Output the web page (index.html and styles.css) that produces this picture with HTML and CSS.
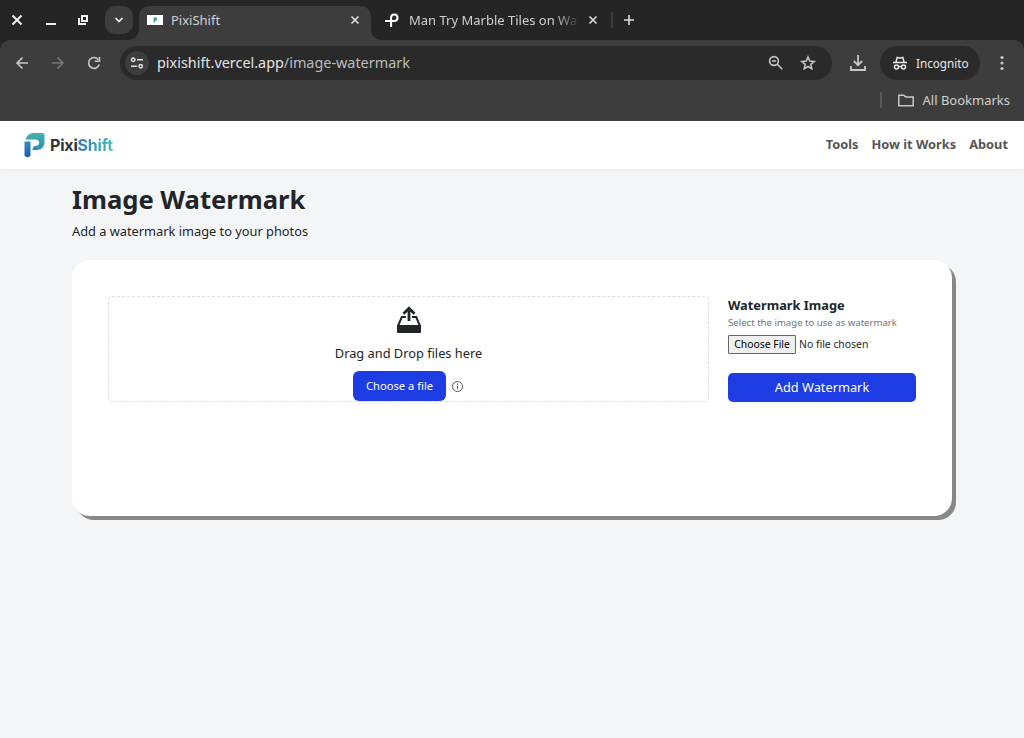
FILE: index.html
```html
<!DOCTYPE html>
<html lang="en">
<head>
  <meta charset="UTF-8" />
  <meta name="viewport" content="width=device-width, initial-scale=1.0"/>
  <title>PixiShift</title>
  <link rel="stylesheet" href="styles.css">
</head>
<body>
  <div class="browser">
    <div class="tab-strip">
      <svg class="window-icons" width="139" height="40" viewBox="0 0 139 40" fill="none" stroke="#f0f0f0" stroke-width="2">
        <path d="M12.5 15.5l9 9m0-9l-9 9M46 24h10"/>
        <path d="M82 16h5v5h-5zM79 18v6h7"/>
        <rect x="105" y="6" width="28" height="28" rx="10" fill="#3d3d3d" stroke="none"/>
        <path d="M115.5 18l3.5 3.5 3.5-3.5" stroke-width="1.7"/>
      </svg>
      <div class="tab active">
        <svg class="favicon" width="16" height="10" viewBox="0 0 16 10">
          <path d="M0 0h16v10H0z" fill="#fff"/>
          <path d="M7.300 7.500V3h2v1.800H8" fill="none" stroke="#28869c" stroke-width="1.2"/>
        </svg>
        <span class="tab-title">PixiShift</span>
        <svg class="tab-close" width="10" height="10" viewBox="0 0 10 10"><path d="M1.5 1.5l7 7m0-7l-7 7" stroke="#dedede" stroke-width="1.6"/></svg>
      </div>
      <div class="tab second">
        <svg class="favicon" width="14" height="14" viewBox="0 0 14 14" fill="none" stroke="#fff" stroke-width="2">
          <path d="M0 8h9.300a3.200 3.200 0 1 0-3.200-3.400V14"/>
        </svg>
        <span class="tab-title faded">Man Try Marble Tiles on Wa</span>
        <svg class="tab-close" width="10" height="10" viewBox="0 0 10 10"><path d="M1.5 1.5l7 7m0-7l-7 7" stroke="#dedede" stroke-width="1.6"/></svg>
      </div>
      <span class="tab-divider"></span>
      <svg class="new-tab" width="10" height="10" viewBox="0 0 10 10"><path d="M5 0v10M0 5h10" stroke="#dedede" stroke-width="1.6"/></svg>
    </div>

    <div class="toolbar">
      <svg class="nav-icons" width="120" height="46" viewBox="0 0 120 46" fill="none" stroke="#c7c7c7" stroke-width="1.6">
        <path d="M28 23H17m5.5-5.5L17 23l5.5 5.5"/>
        <path d="M52 23h11m-5.5-5.5L63 23l-5.5 5.5" stroke="#767676"/>
        <path d="M98.2 19.5A5.4 5.4 0 1 0 99.2 24.5M99.5 17v4.3h-4.8"/>
      </svg>
      <div class="address-bar">
        <span class="site-info">
          <svg width="14" height="12" viewBox="0 0 14 12" fill="none" stroke="#dedede" stroke-width="1.5">
            <circle cx="3.2" cy="2.7" r="1.7"/><circle cx="10.7" cy="9.3" r="1.7"/><path d="M7 2.7h6M1 9.3h6"/>
          </svg>
        </span>
        <span class="url">pixishift.vercel.app<span class="path">/image-watermark</span></span>
        <svg class="zoom-icon" width="16" height="16" viewBox="0 0 16 16" fill="none" stroke="#c7c7c7" stroke-width="1.6">
          <circle cx="6" cy="6" r="4.4"/><path d="M9.3 9.3l5 5M4 6h4"/>
        </svg>
        <svg class="star-icon" width="16" height="16" viewBox="0 0 16 16" fill="none" stroke="#c7c7c7" stroke-width="1.5">
          <path d="M8 2l1.7 4.1 4.5.4-3.4 2.9 1 4.4L8 11.5l-3.8 2.3 1-4.4-3.4-2.9 4.5-.4z"/>
        </svg>
      </div>
      <svg class="download-icon" width="16" height="18" viewBox="0 0 16 18" fill="none" stroke="#c7c7c7" stroke-width="1.8">
        <path d="M8 1v10M3.8 7L8 11.2 12.2 7M1 12v4h14v-4"/>
      </svg>
      <div class="incognito">
        <svg width="14" height="14" viewBox="0 0 14 14" fill="none" stroke="#e8e8e8" stroke-width="1.5">
          <path d="M0 6.5h14M3 6l1.2-4.6 2.8.8 2.8-.8L11 6M5.3 10.5h3.4"/><circle cx="3.5" cy="11" r="2"/><circle cx="10.5" cy="11" r="2"/>
        </svg>
        <span>Incognito</span>
      </div>
      <svg class="menu-icon" width="4" height="16" viewBox="0 0 4 16" fill="#c7c7c7"><circle cx="2" cy="2.5" r="1.6"/><circle cx="2" cy="8" r="1.6"/><circle cx="2" cy="13.5" r="1.6"/></svg>
    </div>

    <div class="bookmarks">
      <span class="bookmark-divider"></span>
      <svg width="16" height="13" viewBox="0 0 16 13" fill="none" stroke="#c7c7c7" stroke-width="1.5"><path d="M.8 11.8V1.2h5l1.7 1.7h7.7v8.9z"/></svg>
      <span>All Bookmarks</span>
    </div>
  </div>

  <header class="navbar">
    <a class="logo">
      <svg width="22" height="25" viewBox="0 0 22 25">
        <defs>
          <linearGradient id="top" x1="0" y1="0" x2="0" y2="1"><stop offset="0" stop-color="#43b5ac"/><stop offset="1" stop-color="#2c8bb5"/></linearGradient>
          <linearGradient id="stem" x1="0" y1="0" x2="0" y2="1"><stop offset="0" stop-color="#318fc7"/><stop offset="1" stop-color="#225aac"/></linearGradient>
        </defs>
        <path d="M1.500 7.500C3 3 6 1 10 1h8.500q2 0 2 2v6.500c0 5-3 8.500-8 8.500H8.500q0-4 3.500-4.200c2 0 3.200-1.300 3.200-3.100S13.800 7.500 12 7.500z" fill="url(#top)"/>
        <path d="M.500 9.500H6.500V22.500q0 2.500-2.500 2.500H2.500q-2 0-2-2z" fill="url(#stem)"/>
      </svg>
      <span class="logo-text">Pixi<span>Shift</span></span>
    </a>
    <nav>
      <a>Tools</a>
      <a>How it Works</a>
      <a>About</a>
    </nav>
  </header>

  <main>
    <h1>Image Watermark</h1>
    <p class="subtitle">Add a watermark image to your photos</p>

    <div class="card">
      <div class="drop-zone">
        <svg class="upload-icon" width="24" height="28" viewBox="0 0 24 28">
          <path d="M0 19h24v7q0 1-1 1H1q-1 0-1-1z" fill="#212529"/>
          <path d="M9 11H4.800L1 20M15 11h4.200L23 20" fill="none" stroke="#212529" stroke-width="2"/>
          <path d="M12 15V3M6.500 7.800L12 2.300l5.500 5.500" fill="none" stroke="#212529" stroke-width="2.800"/>
        </svg>
        <p>Drag and Drop files here</p>
        <div class="choose-row">
          <button class="choose-button">Choose a file</button>
          <svg width="11" height="11" viewBox="0 0 11 11" fill="none" stroke="#444"><circle cx="5.5" cy="5.5" r="5" stroke-width=".9"/><path d="M5.5 4.800v3.400M5.500 2.600v1.200" stroke-width=".9"/></svg>
        </div>
      </div>
      <div class="options">
        <h2>Watermark Image</h2>
        <p class="hint">Select the image to use as watermark</p>
        <div class="file-input">
          <button>Choose File</button>
          <span>No file chosen</span>
        </div>
        <button class="submit-button">Add Watermark</button>
      </div>
    </div>
  </main>
</body>
</html>
```
FILE: styles.css
```css
* {
  box-sizing: border-box;
}

body {
  margin: 0;
  min-height: 738px;
  font-family: "Noto Sans", sans-serif;
  font-size: 12.8px;
  color: #212529;
  background: #f4f5f7;
}

svg {
  display: block;
  flex-shrink: 0;
}

span, a, h1, h2, p {
  white-space: nowrap;
}

h1, h2, p {
  margin: 0;
}

button {
  font-family: inherit;
  padding: 0;
  border: none;
}

/* browser window */
.browser {
  height: 121px;
  font-size: 13px;
  background: #252525;
  color: #d0d0d0;
}

.tab-strip {
  display: flex;
  align-items: center;
  height: 40px;
}

.tab {
  display: flex;
  align-items: center;
}

.tab.active {
  position: relative;
  width: 232px;
  height: 34px;
  margin-top: 6px;
  padding: 0 11px 6px 8px;
  background: #3d3d3d;
  border-radius: 10px 10px 0 0;
}

/* curved feet of the active tab */
.tab.active::before,
.tab.active::after {
  content: "";
  position: absolute;
  bottom: 0;
  width: 10px;
  height: 10px;
}

.tab.active::before {
  left: -10px;
  background: radial-gradient(circle at 0 0, #252525 9.5px, #3d3d3d 10px);
}

.tab.active::after {
  right: -10px;
  background: radial-gradient(circle at 100% 0, #252525 9.5px, #3d3d3d 10px);
}

.tab.active .tab-title {
  margin-left: 8px;
}

.tab.second {
  width: 240px;
  padding: 0 13px 0 14px;
}

.tab.second .tab-title {
  margin-left: 10px;
}

.tab-close {
  margin-left: auto;
}

.faded {
  -webkit-mask-image: linear-gradient(to right, #000 145px, transparent 171px);
  mask-image: linear-gradient(to right, #000 145px, transparent 171px);
}

.tab-divider {
  width: 2px;
  height: 16px;
  margin-right: 11px;
  background: #3d3d3d;
}

.toolbar {
  display: flex;
  align-items: center;
  height: 46px;
  background: #3d3d3d;
  border-radius: 10px 10px 0 0;
}

.address-bar {
  display: flex;
  align-items: center;
  width: 712px;
  height: 34px;
  padding: 0 16px 0 5px;
  background: #2a2a2a;
  border-radius: 17px;
}

.site-info {
  display: flex;
  align-items: center;
  justify-content: center;
  width: 24px;
  height: 24px;
  border-radius: 50%;
  background: #3d3d3d;
}

.url {
  margin-left: 8px;
  padding-bottom: 2px;
  font-size: 14.4px;
  color: #e3e3e3;
}

.path {
  color: #bcbcbc;
}

.zoom-icon {
  margin-left: auto;
}

.star-icon {
  margin-left: 16px;
}

.download-icon {
  margin-left: 18px;
}

.incognito {
  display: flex;
  align-items: center;
  gap: 9px;
  width: 100px;
  height: 34px;
  margin-left: 14px;
  padding-left: 13px;
  font-size: 11.7px;
  color: #e8e8e8;
  background: #2a2a2a;
  border-radius: 17px;
}

.incognito span {
  padding-bottom: 1px;
}

.menu-icon {
  margin-left: 20px;
}

.bookmarks {
  display: flex;
  align-items: center;
  justify-content: flex-end;
  height: 35px;
  padding: 0 14px 7px 0;
  background: #3d3d3d;
}

.bookmarks svg {
  margin: 0 8px 0 16px;
}

.bookmark-divider {
  width: 2px;
  height: 16px;
  background: #5a5a5a;
}

/* site header */
.navbar {
  display: flex;
  align-items: center;
  justify-content: space-between;
  height: 48px;
  padding: 0 16px 1px 24px;
  background: #fff;
  box-shadow: 0 1px 3px rgba(0, 0, 0, 0.06);
}

.logo {
  display: flex;
  align-items: center;
  gap: 4px;
}

.logo-text {
  font-family: Inter, sans-serif;
  font-size: 16px;
  font-weight: 700;
  letter-spacing: -0.2px;
  color: #303437;
}

.logo-text span {
  color: transparent;
  background: linear-gradient(to right, #3475b6, #4bc1b2);
  -webkit-background-clip: text;
  background-clip: text;
}

nav {
  display: flex;
  gap: 13px;
  font-weight: bold;
  color: #555;
}

nav a {
  padding-bottom: 1px;
}

/* page */
main {
  width: 880px;
  margin: 0 auto 0 72px;
  padding-top: 13px;
}

h1 {
  font-size: 25.6px;
  line-height: 36px;
}

.subtitle {
  margin-top: 4px;
  line-height: 18px;
}

.card {
  display: flex;
  justify-content: space-between;
  align-items: flex-start;
  height: 256px;
  margin-top: 20px;
  padding: 36px;
  background: #fff;
  border-radius: 18px;
  box-shadow: 4px 4px 0 #888;
}

.drop-zone {
  display: flex;
  flex-direction: column;
  align-items: center;
  width: 601px;
  height: 106px;
  padding-top: 9px;
  border: 1px dashed #dcdcdc;
  border-radius: 4px;
}

.drop-zone p {
  margin-top: 10px;
  line-height: 18px;
}

.choose-row {
  display: flex;
  align-items: center;
  gap: 6px;
  margin-top: 9px;
  padding-right: 1px;
}

.choose-button {
  width: 93px;
  height: 30px;
  padding-bottom: 1px;
  font-size: 11.2px;
  color: #fff;
  background: #1e3ce3;
  border-radius: 6px;
}

.options {
  width: 188px;
}

.options h2 {
  font-size: 12.8px;
  line-height: 19px;
}

.hint {
  font-size: 9.6px;
  line-height: 15px;
  color: #6f7275;
}

.file-input {
  display: flex;
  align-items: center;
  gap: 3px;
  margin-top: 5px;
  font-size: 10.4px;
}

.file-input span {
  padding-bottom: 1px;
}

.file-input button {
  width: 68px;
  height: 19px;
  padding-bottom: 1px;
  font-size: 10.4px;
  color: #000;
  background: #efefef;
  border: 1px solid #666;
  border-radius: 1px;
}

.submit-button {
  width: 188px;
  height: 29px;
  margin-top: 19px;
  padding-bottom: 1px;
  font-size: 12.8px;
  color: #fff;
  background: #1e3ce3;
  border-radius: 5px;
}
```
